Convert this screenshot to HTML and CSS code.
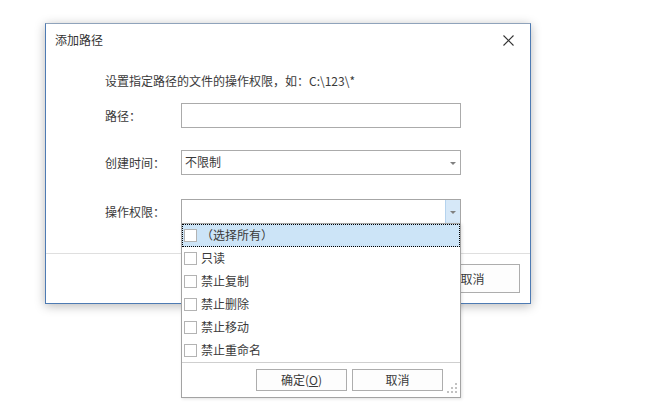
FILE: index.html
```html
<!DOCTYPE html>
<html lang="zh-CN">
<head>
<meta charset="utf-8">
<title>添加路径</title>
<link rel="stylesheet" href="styles.css">
</head>
<body>
<div class="dialog">
  <div class="titlebar">
    <span class="title">添加路径</span>
    <span class="close"><svg width="11" height="11" viewBox="0 0 11 11"><path d="M0.5 0.5 L10.5 10.5 M10.5 0.5 L0.5 10.5" stroke="#333" stroke-width="1.1" fill="none"/></svg></span>
  </div>
  <div class="content">
    <p class="hint">设置指定路径的文件的操作权限，如：C:\123\*</p>
    <div class="row row-path">
      <span class="label">路径：</span>
      <div class="input"></div>
    </div>
    <div class="row row-time">
      <span class="label">创建时间：</span>
      <div class="select"><span class="value">不限制</span><span class="arrow"><i class="tri"></i></span></div>
    </div>
    <div class="row row-perm">
      <span class="label">操作权限：</span>
      <div class="select open">
        <span class="value"></span><span class="arrow"><i class="tri"></i></span>
        <div class="dropdown">
          <ul class="items">
            <li class="item current"><span class="box"></span><span class="text">（选择所有）</span></li>
            <li class="item"><span class="box"></span><span class="text">只读</span></li>
            <li class="item"><span class="box"></span><span class="text">禁止复制</span></li>
            <li class="item"><span class="box"></span><span class="text">禁止删除</span></li>
            <li class="item"><span class="box"></span><span class="text">禁止移动</span></li>
            <li class="item"><span class="box"></span><span class="text">禁止重命名</span></li>
          </ul>
          <div class="dd-footer">
            <button class="btn btn-small">确定(<u>O</u>)</button>
            <button class="btn btn-small">取消</button>
          </div>
          <svg class="grip" width="11" height="11" viewBox="0 0 11 11">
            <rect x="8" y="0" width="2" height="2" fill="#c2c2c2"/>
            <rect x="4" y="4" width="2" height="2" fill="#c2c2c2"/>
            <rect x="8" y="4" width="2" height="2" fill="#c2c2c2"/>
            <rect x="0" y="8" width="2" height="2" fill="#c2c2c2"/>
            <rect x="4" y="8" width="2" height="2" fill="#c2c2c2"/>
            <rect x="8" y="8" width="2" height="2" fill="#c2c2c2"/>
          </svg>
        </div>
      </div>
    </div>
  </div>
  <div class="footer">
    <button class="btn btn-main">确定</button>
    <button class="btn btn-main">取消</button>
  </div>
</div>
</body>
</html>
```

FILE: styles.css
```css
* {
  box-sizing: border-box;
}

html, body {
  margin: 0;
  background: #ffffff;
}

html {
  height: 417px;
}

body {
  min-height: 417px;
  padding: 23px 0 0 45px;
  font-family: "Noto Sans CJK SC", "Noto Sans", "Liberation Sans", sans-serif;
  font-size: 12px;
  color: #3a3a3a;
}

.dialog {
  position: relative;
  width: 486px;
  height: 281px;
  background: #ffffff;
  border: 1px solid #4e7bb3;
  border-top-color: #8fa3bb;
  box-shadow: 0 2px 10px rgba(0, 0, 0, 0.28);
  display: flex;
  flex-direction: column;
}

.titlebar {
  height: 32px;
  display: flex;
  align-items: center;
  justify-content: space-between;
  padding: 0 16px 0 9px;
}

.title {
  font-size: 12px;
  line-height: 32px;
  color: #333;
}

.close {
  display: flex;
  width: 11px;
  height: 11px;
  margin-top: 1px;
}

.content {
  position: relative;
  z-index: 2;
  height: 197px;
  padding: 16px 0 0 59px;
}

.hint {
  margin: 0;
  line-height: 18px;
  white-space: nowrap;
}

.row {
  display: flex;
  align-items: center;
  height: 25px;
}

.row-path { margin-top: 13px; }
.row-time { margin-top: 22px; }
.row-perm { margin-top: 24px; }

.label {
  width: 76px;
  line-height: 18px;
  white-space: nowrap;
}

.input,
.select {
  width: 280px;
  height: 25px;
  border: 1px solid #ababab;
  background: #fff;
}

.select {
  position: relative;
  display: flex;
  align-items: center;
}

.select .value {
  flex: 1;
  padding-left: 3px;
  line-height: 18px;
  margin-top: -1px;
}

.select .arrow {
  width: 15px;
  height: 100%;
  display: flex;
  align-items: center;
  justify-content: center;
}

.select.open {
  border-color: #a6a6a6;
}

.select.open .arrow {
  background: #d6e8f8;
  border-left: 1px solid #b5d3ee;
}

.tri {
  display: block;
  width: 0;
  height: 0;
  border-left: 3px solid transparent;
  border-right: 3px solid transparent;
  border-top: 3px solid #808080;
  margin-top: 1px;
}

.dropdown {
  position: absolute;
  left: -1px;
  top: 100%;
  width: 280px;
  background: #fff;
  border: 1px solid #a3a3a3;
  box-shadow: 1px 1px 3px rgba(0, 0, 0, 0.12);
  z-index: 5;
}

.items {
  list-style: none;
  margin: 0;
  padding: 0;
}

.item {
  height: 23px;
  display: flex;
  align-items: center;
  padding-left: 2px;
  white-space: nowrap;
}

.item.current {
  background: #cce4f7;
  outline: 1px dotted #000;
  outline-offset: -1px;
}

.box {
  width: 13px;
  height: 13px;
  border: 1px solid #b3b3b3;
  background: #fff;
  margin-right: 4px;
  flex: none;
}

.item .text {
  line-height: 18px;
  margin-top: -1px;
}

.dd-footer {
  border-top: 1px solid #cfcfcf;
  padding: 6px 17px 6px 0;
  display: flex;
  justify-content: flex-end;
  gap: 5px;
}

.btn {
  font-family: inherit;
  font-size: 12px;
  color: #3a3a3a;
  background: #fdfdfd;
  border: 1px solid #adadad;
  padding: 0;
  margin: 0;
  line-height: 18px;
}

.btn-small {
  width: 91px;
  height: 22px;
}

.grip {
  position: absolute;
  right: 2px;
  bottom: 3px;
}

.footer {
  height: 50px;
  border-top: 1px solid #dfdfdf;
  padding: 10px 10px 10px 0;
  display: flex;
  justify-content: flex-end;
  gap: 6px;
}

.btn-main {
  width: 95px;
  height: 29px;
}
```
